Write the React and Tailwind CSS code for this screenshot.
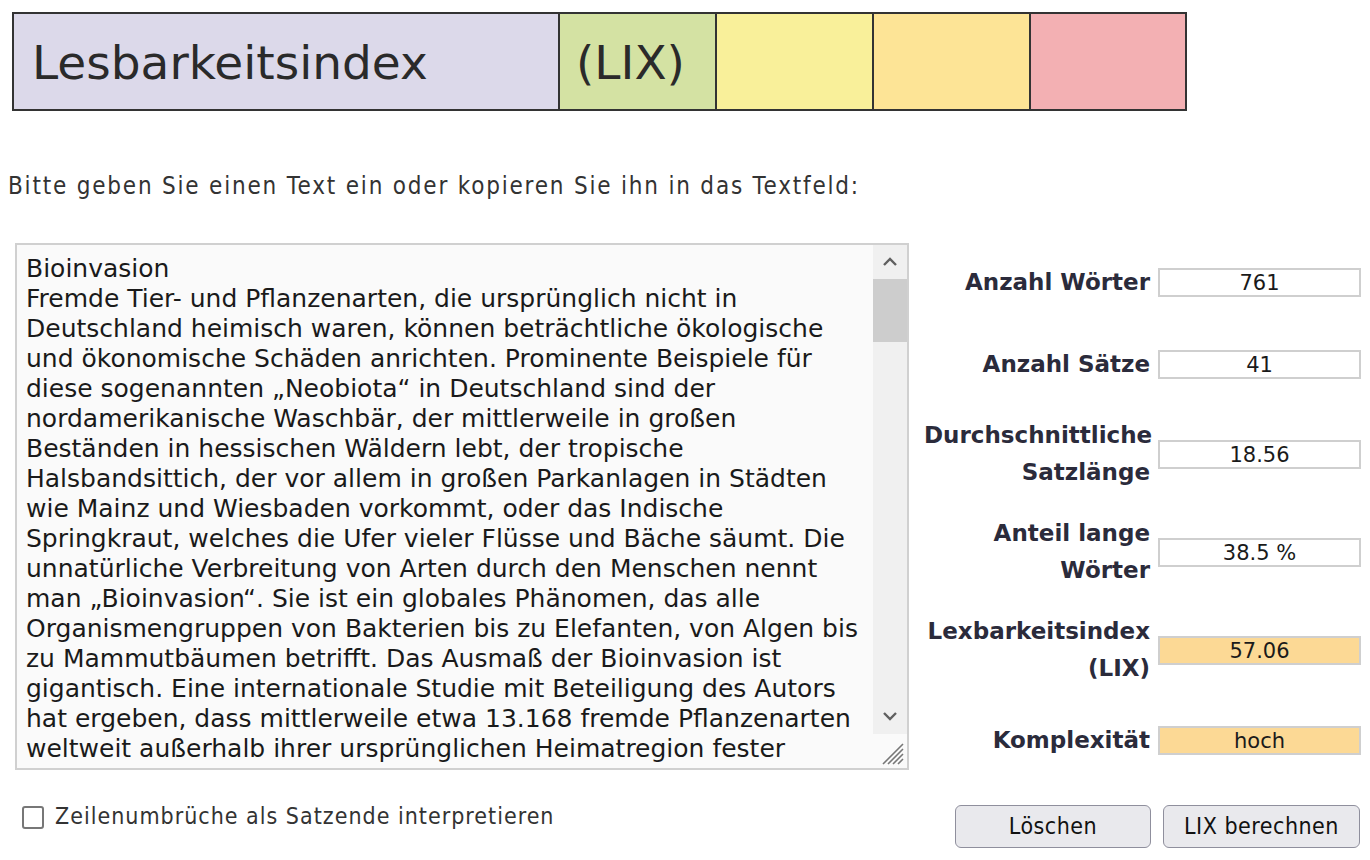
import React from "react";

const lines = [
  "Bioinvasion",
  "Fremde Tier- und Pflanzenarten, die ursprünglich nicht in",
  "Deutschland heimisch waren, können beträchtliche ökologische",
  "und ökonomische Schäden anrichten. Prominente Beispiele für",
  "diese sogenannten „Neobiota“ in Deutschland sind der",
  "nordamerikanische Waschbär, der mittlerweile in großen",
  "Beständen in hessischen Wäldern lebt, der tropische",
  "Halsbandsittich, der vor allem in großen Parkanlagen in Städten",
  "wie Mainz und Wiesbaden vorkommt, oder das Indische",
  "Springkraut, welches die Ufer vieler Flüsse und Bäche säumt. Die",
  "unnatürliche Verbreitung von Arten durch den Menschen nennt",
  "man „Bioinvasion“. Sie ist ein globales Phänomen, das alle",
  "Organismengruppen von Bakterien bis zu Elefanten, von Algen bis",
  "zu Mammutbäumen betrifft. Das Ausmaß der Bioinvasion ist",
  "gigantisch. Eine internationale Studie mit Beteiligung des Autors",
  "hat ergeben, dass mittlerweile etwa 13.168 fremde Pflanzenarten",
  "weltweit außerhalb ihrer ursprünglichen Heimatregion fester",
  "Bestandteil der jeweiligen einheimischen Flora geworden sind.",
];

const rows = [
  { label: ["Anzahl Wörter"], value: "761", h: "h-[82px]", hl: false },
  { label: ["Anzahl Sätze"], value: "41", h: "h-[82px]", hl: false },
  { label: ["Durchschnittliche", "Satzlänge"], value: "18.56", h: "h-[98px]", hl: false },
  { label: ["Anteil lange", "Wörter"], value: "38.5 %", h: "h-[98px]", hl: false },
  { label: ["Lexbarkeitsindex", "(LIX)"], value: "57.06", h: "h-[98px]", hl: true },
  { label: ["Komplexität"], value: "hoch", h: "h-[82px]", hl: true },
];

const verdana = "font-['DejaVu_Sans',Verdana,sans-serif]";
const tahoma = "font-['DejaVu_Sans_Condensed','Liberation_Sans',sans-serif]";

export default function App() {
  return (
    <div className={`w-[1370px] h-[860px] bg-white text-[#222] overflow-hidden ${verdana}`}>
      {/* Header bar */}
      <div className="pt-[12px] pl-[12px]">
        <div className="flex w-[1175px] h-[99px] border-2 border-[#333] text-[47px] text-[#2a2a2a]">
          <div className="w-[544px] bg-[#dcd9ea] flex items-center pl-[18px] pt-[4px]">Lesbarkeitsindex</div>
          <div className="w-[157px] bg-[#d4e2a3] border-l-2 border-[#333] flex items-center pl-[16px] pt-[4px]">(LIX)</div>
          <div className="w-[157px] bg-[#f9f09a] border-l-2 border-[#333]"></div>
          <div className="w-[157px] bg-[#fde496] border-l-2 border-[#333]"></div>
          <div className="flex-1 bg-[#f3b0b3] border-l-2 border-[#333]"></div>
        </div>
      </div>

      {/* Prompt */}
      <div className={`pl-[8px] mt-[61px] text-[24px] leading-[28px] tracking-[1.8px] text-[#333] ${tahoma}`}>
        Bitte geben Sie einen Text ein oder kopieren Sie ihn in das Textfeld:
      </div>

      {/* Main */}
      <div className="flex mt-[43px]">
        {/* Textarea */}
        <div className="ml-[15px] w-[894px] h-[527px] border-2 border-[#d0d0d0] bg-[#fafafa] flex overflow-hidden">
          <div className="flex-1 pl-[9px] pt-[9px] text-[25px] leading-[30px] text-[#1a1a1a] whitespace-pre overflow-hidden">
            {lines.map((l, i) => (
              <div key={i}>{l}</div>
            ))}
          </div>
          {/* Scrollbar */}
          <div className="w-[34px] flex flex-col bg-[#f0f0f0]">
            <div className="h-[34px] flex items-center justify-center">
              <svg width="16" height="10" viewBox="0 0 16 10">
                <path d="M2 8 L8 2 L14 8" fill="none" stroke="#606060" strokeWidth="2.4" />
              </svg>
            </div>
            <div className="h-[63px] bg-[#cdcdcd]"></div>
            <div className="flex-1"></div>
            <div className="h-[36px] flex items-center justify-center">
              <svg width="16" height="10" viewBox="0 0 16 10">
                <path d="M2 2 L8 8 L14 2" fill="none" stroke="#606060" strokeWidth="2.4" />
              </svg>
            </div>
            <div className="h-[34px] bg-[#fafafa] flex items-end justify-end pr-[2px] pb-[2px]">
              <svg width="26" height="26" viewBox="0 0 26 26">
                <path d="M24 4 L4 24 M24 9 L9 24 M24 14 L14 24 M24 19 L19 24" stroke="#777" strokeWidth="1.6" />
              </svg>
            </div>
          </div>
        </div>

        {/* Right panel */}
        <div className="ml-[15px] flex flex-col -mt-[2px]">
          {rows.map((r, i) => (
            <div key={i} className={`flex items-center ${r.h}`}>
              <div className="w-[226px] text-right font-bold text-[23px] leading-[37px] text-[#2b2b3b]">
                {r.label.map((t, j) => (
                  <div key={j}>{t}</div>
                ))}
              </div>
              <div
                className={`ml-[8px] w-[203px] h-[29px] border-2 border-[#cfcfcf] flex items-center justify-center pt-[3px] text-[21px] text-[#1a1a1a] ${
                  r.hl ? "bg-[#fcd995]" : "bg-white"
                }`}
              >
                {r.value}
              </div>
            </div>
          ))}
        </div>
      </div>

      {/* Bottom row */}
      <div className={`flex items-start mt-[24px] ${tahoma}`}>
        <div className="flex items-center mt-[1px]">
          <div className="ml-[22px] w-[22px] h-[23px] border-2 border-[#777] rounded-[3px] bg-white"></div>
          <div className="ml-[11px] text-[23px] leading-[26px] tracking-[1px] text-[#333] -mt-[4px]">
            Zeilenumbrüche als Satzende interpretieren
          </div>
        </div>
        <div className="ml-auto mr-[10px] flex gap-[12px]">
          <button className="w-[196px] h-[43px] bg-[#e9e9ed] border border-[#8f8f9d] rounded-[6px] text-[23px] tracking-[0.5px] text-[#111]">
            Löschen
          </button>
          <button className="w-[197px] h-[43px] bg-[#e9e9ed] border border-[#8f8f9d] rounded-[6px] text-[23px] tracking-[0.5px] text-[#111]">
            LIX berechnen
          </button>
        </div>
      </div>
    </div>
  );
}
